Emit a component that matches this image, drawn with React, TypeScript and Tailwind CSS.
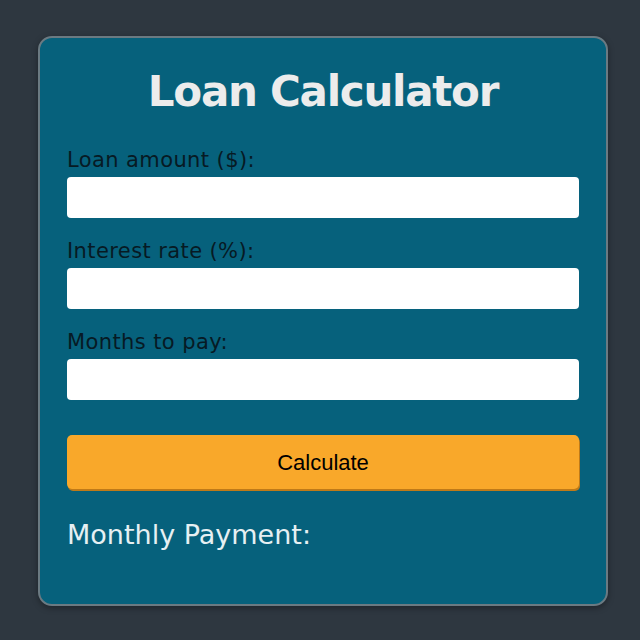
import React, { useState } from 'react';

const fields = [
  { id: 'amount', label: 'Loan amount ($):' },
  { id: 'rate', label: 'Interest rate (%):' },
  { id: 'months', label: 'Months to pay:' },
];

const App: React.FC = () => {
  const [values, setValues] = useState<Record<string, string>>({ amount: '', rate: '', months: '' });
  const [payment, setPayment] = useState('');

  const calculate = () => {
    const p = parseFloat(values.amount);
    const r = parseFloat(values.rate) / 100 / 12;
    const n = parseFloat(values.months);
    if (!p || !n) return;
    const m = r ? (p * r) / (1 - Math.pow(1 + r, -n)) : p / n;
    setPayment('$' + m.toFixed(2));
  };

  return (
    <div className="min-h-screen w-full bg-[#2e3740] flex items-start justify-center pt-[36px] pl-[6px]" style={{ fontFamily: '"DejaVu Sans", "Noto Sans", sans-serif' }}>
      <div className="w-[570px] h-[570px] bg-[#06617c] rounded-[14px] border-2 border-[#6b7a82] shadow-[0_2px_6px_rgba(0,0,0,0.35)] px-[27px] pt-[24px] flex flex-col">
        <h1 className="text-center text-[42px] font-bold text-[#ececec] leading-[60px] tracking-[-0.03em] mb-[24px]">Loan Calculator</h1>

        {fields.map(f => (
          <div key={f.id} className="flex flex-col mb-[19px]">
            <label htmlFor={f.id} className="text-[21px] leading-[28px] tracking-[0.4px] text-[#061a24] mb-[3px]">{f.label}</label>
            <input
              id={f.id}
              type="text"
              value={values[f.id]}
              onChange={e => setValues({ ...values, [f.id]: e.target.value })}
              className="h-[41px] w-full bg-white rounded-[4px] outline-none px-3"
            />
          </div>
        ))}

        <button
          onClick={calculate}
          className="mt-[16px] h-[54px] w-full bg-[#f9a82a] rounded-[5px] shadow-[1px_2px_0_#bf7a18] text-[22px] text-black"
          style={{ fontFamily: '"Liberation Sans", Arial, sans-serif' }}
        >
          Calculate
        </button>

        <div className="mt-[28px] text-[27px] leading-[36px] text-[#e6f0f3]">Monthly Payment: {payment}</div>
      </div>
    </div>
  );
};

export default App;
